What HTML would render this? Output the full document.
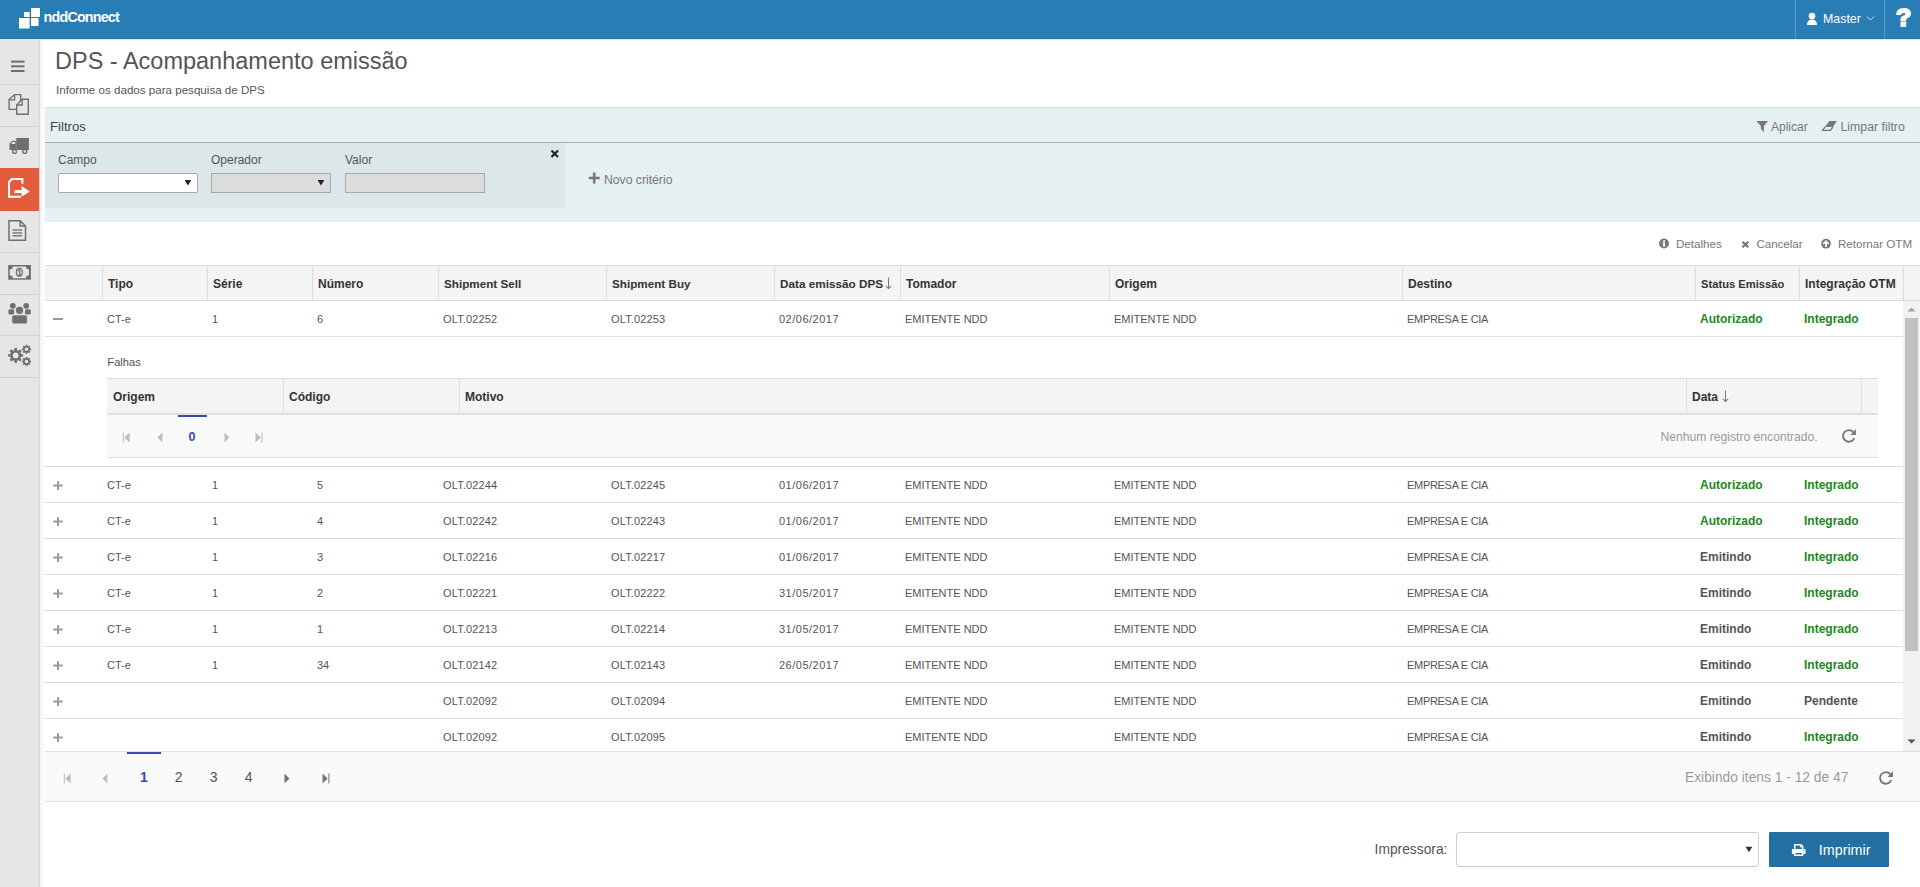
<!DOCTYPE html>
<html><head><meta charset="utf-8"><style>
html,body{margin:0;padding:0;}
body{width:1920px;height:887px;overflow:hidden;position:relative;background:#fff;font-family:"Liberation Sans", sans-serif;}
.t{position:absolute;white-space:nowrap;}
</style></head><body>
<div style="position:absolute;left:0px;top:0px;width:1920px;height:39px;background:#297db5"></div><div style="position:absolute;left:0px;top:38px;width:1920px;height:1px;background:#1e74b0"></div><svg style="position:absolute;left:0px;top:0px" width="44" height="39" viewBox="0 0 44 39"><rect x="24" y="12" width="5.6" height="5" fill="#fff"/><rect x="31" y="8" width="9" height="9" fill="#fff"/><rect x="19" y="18" width="10.6" height="10.5" fill="#fff"/><rect x="31" y="18" width="7.5" height="8" fill="#fff"/></svg><div class="t" style="left:43.6px;top:10.01px;font-size:14.3px;line-height:14.3px;color:#fff;font-weight:bold;letter-spacing:-0.8px">nddConnect</div><div style="position:absolute;left:1795px;top:0px;width:1px;height:39px;background:#5a9bc8"></div><div style="position:absolute;left:1884px;top:0px;width:1px;height:39px;background:#5a9bc8"></div><svg style="position:absolute;left:1806px;top:12px" width="12" height="14" viewBox="0 0 12 14"><circle cx="6" cy="4" r="3.3" fill="#fff"/><path d="M1 13 Q1 7.5 6 7.5 Q11 7.5 11 13 Z" fill="#fff"/></svg><div class="t" style="left:1823px;top:12.99px;font-size:12.4px;line-height:12.4px;color:#fff;font-weight:normal;">Master</div><svg style="position:absolute;left:1866px;top:15px" width="9" height="7" viewBox="0 0 9 7"><path d="M1 1.5 L4.5 5 L8 1.5" stroke="#cfe2f0" stroke-width="1" fill="none"/></svg><svg style="position:absolute;left:1894px;top:6px" width="20" height="23" viewBox="0 0 20 23"><path d="M2 8.9 Q2.5 1.9 9.6 1.9 Q17.1 1.9 17.1 7.6 Q17.1 10.8 13.6 12.3 Q12.2 12.9 12.2 14 V15 H6.5 V13.2 Q6.5 10.6 9.6 9.6 Q11.4 9 11.4 7.9 Q11.4 6.9 9.5 6.9 Q7.4 6.9 6.8 8.9 Z" fill="#fff"/><rect x="6.5" y="15.5" width="5.7" height="5.5" fill="#fff"/></svg><div style="position:absolute;left:0px;top:39px;width:39px;height:848px;background:#e6e6e6"></div><div style="position:absolute;left:39px;top:39px;width:1px;height:848px;background:#d6d6d6"></div><div style="position:absolute;left:40px;top:39px;width:6px;height:848px;background:linear-gradient(to right,rgba(0,0,0,0.045),rgba(0,0,0,0.015) 50%,rgba(0,0,0,0))"></div><div style="position:absolute;left:0px;top:39px;width:1920px;height:1px;background:#ebe8e5"></div><div style="position:absolute;left:0px;top:84px;width:39px;height:1px;background:#d3d3d3"></div><div style="position:absolute;left:0px;top:126px;width:39px;height:1px;background:#d3d3d3"></div><div style="position:absolute;left:0px;top:252px;width:39px;height:1px;background:#d3d3d3"></div><div style="position:absolute;left:0px;top:294px;width:39px;height:1px;background:#d3d3d3"></div><div style="position:absolute;left:0px;top:335px;width:39px;height:1px;background:#d3d3d3"></div><div style="position:absolute;left:0px;top:377px;width:39px;height:1px;background:#d3d3d3"></div><div style="position:absolute;left:0px;top:168px;width:39px;height:43px;background:#e35c3b"></div><svg style="position:absolute;left:11px;top:60px" width="14" height="13" viewBox="0 0 14 13"><rect x="0" y="0.6" width="13.5" height="2" fill="#6f6f6f"/><rect x="0" y="5.3" width="13.5" height="2" fill="#6f6f6f"/><rect x="0" y="10" width="13.5" height="2" fill="#6f6f6f"/></svg><svg style="position:absolute;left:7px;top:92px" width="24" height="24" viewBox="0 0 24 24"><path d="M2.1 7.6 L7.6 2.6 H13.7 V17.4 H2.1 Z" stroke="#6f6f6f" stroke-width="1.4" fill="none"/><path d="M7.6 2.6 V7.8 H2.1" stroke="#6f6f6f" stroke-width="1.3" fill="none"/><path d="M9.7 12.9 L15.2 7.3 H21.3 V22.2 H9.7 Z" fill="#e6e6e6" stroke="#6f6f6f" stroke-width="1.4"/><path d="M15.2 7.3 V13 H9.7" stroke="#6f6f6f" stroke-width="1.3" fill="none"/></svg><svg style="position:absolute;left:8px;top:136px" width="23" height="19" viewBox="0 0 23 19"><rect x="8.3" y="2" width="12.6" height="12" fill="#6f6f6f"/><path d="M1.5 14 V7.5 L4.5 4.8 H8.5 V14 Z" fill="#6f6f6f"/><path d="M2.8 8 L4.9 6.1 H7.3 V8 Z" fill="#e6e6e6"/><circle cx="6.5" cy="15.5" r="2.6" fill="#6f6f6f"/><circle cx="6.5" cy="15.5" r="1.2" fill="#e6e6e6"/><circle cx="16.8" cy="15.5" r="2.6" fill="#6f6f6f"/><circle cx="16.8" cy="15.5" r="1.2" fill="#e6e6e6"/></svg><svg style="position:absolute;left:7px;top:176px" width="24" height="24" viewBox="0 0 24 24"><path d="M15.35 7.7 V3.1 H5 L2.05 6 V20.85 H14" stroke="#fff" stroke-width="2" fill="none"/><rect x="7.5" y="14.1" width="7.3" height="3" fill="#fff"/><path d="M14.6 10 L22.75 15.5 L14.6 20.8 Z" fill="#fff"/></svg><svg style="position:absolute;left:7px;top:218px" width="22" height="25" viewBox="0 0 22 25"><path d="M2 2.8 H13.2 L18.5 8 V22.3 H2 Z" stroke="#6f6f6f" stroke-width="1.5" fill="none"/><path d="M13.2 2.8 V8 H18.5" stroke="#6f6f6f" stroke-width="1.5" fill="none"/><rect x="5.5" y="11.4" width="9.8" height="1.3" fill="#6f6f6f"/><rect x="5.5" y="14.3" width="9.8" height="1.3" fill="#6f6f6f"/><rect x="5.5" y="17.1" width="9.8" height="1.3" fill="#6f6f6f"/></svg><svg style="position:absolute;left:7px;top:263px" width="25" height="19" viewBox="0 0 25 19"><rect x="1.2" y="2" width="22.7" height="14.7" fill="#6f6f6f"/><path d="M5.75 3.6 H19 A3 3 0 0 0 22 6.6 V12.3 A3 3 0 0 0 19 15.3 H5.75 A3 3 0 0 0 2.75 12.3 V6.6 A3 3 0 0 0 5.75 3.6 Z" fill="#e6e6e6"/><ellipse cx="12.35" cy="9.3" rx="2.95" ry="3.9" fill="none" stroke="#6f6f6f" stroke-width="1.3"/><rect x="12" y="6.4" width="1.35" height="6" fill="#6f6f6f"/><rect x="10.8" y="11.7" width="3.5" height="1.2" fill="#6f6f6f"/><path d="M12.3 6.6 L10.7 8.2" stroke="#6f6f6f" stroke-width="1.2"/></svg><svg style="position:absolute;left:7px;top:302px" width="25" height="24" viewBox="0 0 25 24"><circle cx="5.86" cy="3.8" r="2.9" fill="#6f6f6f"/><circle cx="19.2" cy="3.8" r="2.9" fill="#6f6f6f"/><rect x="1.4" y="7.2" width="5.8" height="5.4" rx="1.6" fill="#6f6f6f"/><rect x="18" y="7.2" width="5.8" height="5.4" rx="1.6" fill="#6f6f6f"/><circle cx="12.56" cy="8.35" r="4.06" fill="#6f6f6f" stroke="#e6e6e6" stroke-width="1"/><rect x="4.8" y="12.9" width="15.5" height="9" rx="2" fill="#6f6f6f" stroke="#e6e6e6" stroke-width="0.8"/></svg><svg style="position:absolute;left:7px;top:342px" width="26" height="26" viewBox="0 0 26 26"><circle cx="8.67" cy="13.4" r="5.5" fill="#6f6f6f"/><rect x="7.32" y="6.05" width="2.7" height="7.35" fill="#6f6f6f" transform="rotate(0 8.67 13.4)"/><rect x="7.32" y="6.05" width="2.7" height="7.35" fill="#6f6f6f" transform="rotate(45 8.67 13.4)"/><rect x="7.32" y="6.05" width="2.7" height="7.35" fill="#6f6f6f" transform="rotate(90 8.67 13.4)"/><rect x="7.32" y="6.05" width="2.7" height="7.35" fill="#6f6f6f" transform="rotate(135 8.67 13.4)"/><rect x="7.32" y="6.05" width="2.7" height="7.35" fill="#6f6f6f" transform="rotate(180 8.67 13.4)"/><rect x="7.32" y="6.05" width="2.7" height="7.35" fill="#6f6f6f" transform="rotate(225 8.67 13.4)"/><rect x="7.32" y="6.05" width="2.7" height="7.35" fill="#6f6f6f" transform="rotate(270 8.67 13.4)"/><rect x="7.32" y="6.05" width="2.7" height="7.35" fill="#6f6f6f" transform="rotate(315 8.67 13.4)"/><circle cx="8.67" cy="13.4" r="2.85" fill="#e6e6e6"/><circle cx="19.5" cy="7.3" r="3.4" fill="#6f6f6f"/><rect x="18.65" y="2.70" width="1.7" height="4.60" fill="#6f6f6f" transform="rotate(0 19.5 7.3)"/><rect x="18.65" y="2.70" width="1.7" height="4.60" fill="#6f6f6f" transform="rotate(45 19.5 7.3)"/><rect x="18.65" y="2.70" width="1.7" height="4.60" fill="#6f6f6f" transform="rotate(90 19.5 7.3)"/><rect x="18.65" y="2.70" width="1.7" height="4.60" fill="#6f6f6f" transform="rotate(135 19.5 7.3)"/><rect x="18.65" y="2.70" width="1.7" height="4.60" fill="#6f6f6f" transform="rotate(180 19.5 7.3)"/><rect x="18.65" y="2.70" width="1.7" height="4.60" fill="#6f6f6f" transform="rotate(225 19.5 7.3)"/><rect x="18.65" y="2.70" width="1.7" height="4.60" fill="#6f6f6f" transform="rotate(270 19.5 7.3)"/><rect x="18.65" y="2.70" width="1.7" height="4.60" fill="#6f6f6f" transform="rotate(315 19.5 7.3)"/><circle cx="19.5" cy="7.3" r="1.75" fill="#e6e6e6"/><circle cx="19.5" cy="19.5" r="3.4" fill="#6f6f6f"/><rect x="18.65" y="14.90" width="1.7" height="4.60" fill="#6f6f6f" transform="rotate(0 19.5 19.5)"/><rect x="18.65" y="14.90" width="1.7" height="4.60" fill="#6f6f6f" transform="rotate(45 19.5 19.5)"/><rect x="18.65" y="14.90" width="1.7" height="4.60" fill="#6f6f6f" transform="rotate(90 19.5 19.5)"/><rect x="18.65" y="14.90" width="1.7" height="4.60" fill="#6f6f6f" transform="rotate(135 19.5 19.5)"/><rect x="18.65" y="14.90" width="1.7" height="4.60" fill="#6f6f6f" transform="rotate(180 19.5 19.5)"/><rect x="18.65" y="14.90" width="1.7" height="4.60" fill="#6f6f6f" transform="rotate(225 19.5 19.5)"/><rect x="18.65" y="14.90" width="1.7" height="4.60" fill="#6f6f6f" transform="rotate(270 19.5 19.5)"/><rect x="18.65" y="14.90" width="1.7" height="4.60" fill="#6f6f6f" transform="rotate(315 19.5 19.5)"/><circle cx="19.5" cy="19.5" r="1.75" fill="#e6e6e6"/></svg><div class="t" style="left:55px;top:49.99px;font-size:23.5px;line-height:23.5px;color:#555;font-weight:normal;">DPS - Acompanhamento emissão</div><div class="t" style="left:56px;top:83.99px;font-size:11.6px;line-height:11.6px;color:#555;font-weight:normal;">Informe os dados para pesquisa de DPS</div><div style="position:absolute;left:45px;top:107px;width:1875px;height:1px;background:#d9dfe1"></div><div style="position:absolute;left:45px;top:108px;width:1875px;height:34px;background:#e5f0f2"></div><div style="position:absolute;left:45px;top:142px;width:1875px;height:1px;background:#a8b2b5"></div><div style="position:absolute;left:45px;top:143px;width:1875px;height:79px;background:#e5f0f2"></div><div style="position:absolute;left:45px;top:143px;width:520px;height:65px;background:#dce7e9"></div><div class="t" style="left:50px;top:119.99px;font-size:13.2px;line-height:13.2px;color:#444;font-weight:normal;">Filtros</div><svg style="position:absolute;left:1756px;top:120px" width="13" height="13" viewBox="0 0 13 13"><path d="M0.4 1 H12 L7.9 5.9 V11.9 L4.9 9 V5.9 Z" fill="#777"/></svg><div class="t" style="left:1771px;top:121.01px;font-size:12px;line-height:12px;color:#777;font-weight:normal;">Aplicar</div><svg style="position:absolute;left:1821px;top:120px" width="17" height="13" viewBox="0 0 17 13"><path d="M8.2 1 H16 L11.9 7 H4 Z" fill="#777"/><path d="M4 7 L1.5 10.4 H9.4 L11.9 7" fill="none" stroke="#777" stroke-width="1.3" stroke-linejoin="miter"/></svg><div class="t" style="left:1840.5px;top:121.00px;font-size:12.3px;line-height:12.3px;color:#777;font-weight:normal;">Limpar filtro</div><div class="t" style="left:58px;top:154.00px;font-size:12px;line-height:12px;color:#555;font-weight:normal;">Campo</div><div class="t" style="left:211px;top:154.00px;font-size:12px;line-height:12px;color:#555;font-weight:normal;">Operador</div><div class="t" style="left:345px;top:154.00px;font-size:12px;line-height:12px;color:#555;font-weight:normal;">Valor</div><div style="position:absolute;left:58px;top:173px;width:140px;height:20px;background:#fff;border:1px solid #a9a9a9;box-sizing:border-box;border-radius:2px"></div><div style="position:absolute;left:211px;top:173px;width:120px;height:20px;background:#dcdcdc;border:1px solid #a9a9a9;box-sizing:border-box"></div><div style="position:absolute;left:345px;top:173px;width:140px;height:20px;background:#dcdcdc;border:1px solid #a9a9a9;box-sizing:border-box"></div><svg style="position:absolute;left:183px;top:178px" width="10" height="9" viewBox="0 0 10 9"><path d="M2 2 H7.9 V2.8 L4.95 7.4 L2 2.8 Z" fill="#222"/></svg><svg style="position:absolute;left:316px;top:178px" width="10" height="9" viewBox="0 0 10 9"><path d="M2 2 H7.9 V2.8 L4.95 7.4 L2 2.8 Z" fill="#222"/></svg><svg style="position:absolute;left:549px;top:148px" width="12" height="12" viewBox="0 0 12 12"><path d="M2.5 2.5 L9 9 M9 2.5 L2.5 9" stroke="#222" stroke-width="2.2"/></svg><svg style="position:absolute;left:587px;top:171px" width="14" height="14" viewBox="0 0 14 14"><path d="M7.2 1.5 V12.5 M1.7 7 H12.7" stroke="#777" stroke-width="2.6"/></svg><div class="t" style="left:604px;top:174.01px;font-size:12.2px;line-height:12.2px;color:#777;font-weight:normal;">Novo critério</div><svg style="position:absolute;left:1658px;top:237px" width="12" height="13" viewBox="0 0 12 13"><circle cx="6" cy="6.5" r="4.95" fill="#777"/><circle cx="6.1" cy="4.1" r="1.05" fill="#fff"/><path d="M4.3 5.6 H7 V8.9 H7.6 V9.6 H4.5 V8.9 H5.1 V6.3 H4.3 Z" fill="#fff"/></svg><div class="t" style="left:1676px;top:237.99px;font-size:11.6px;line-height:11.6px;color:#777;font-weight:normal;">Detalhes</div><svg style="position:absolute;left:1740px;top:239px" width="11" height="10" viewBox="0 0 11 10"><path d="M2.5 2.8 L8.3 8.2 M8.3 2.8 L2.5 8.2" stroke="#777" stroke-width="2.2"/></svg><div class="t" style="left:1756.5px;top:239.00px;font-size:11.5px;line-height:11.5px;color:#777;font-weight:normal;">Cancelar</div><svg style="position:absolute;left:1820px;top:237px" width="12" height="13" viewBox="0 0 12 13"><circle cx="6" cy="6.7" r="4.85" fill="#777"/><path d="M6 3 L9.4 6.6 L8.4 7.6 L6.95 6.2 V9.9 H5.05 V6.2 L3.6 7.6 L2.6 6.6 Z" fill="#fff"/></svg><div class="t" style="left:1838px;top:237.99px;font-size:11.6px;line-height:11.6px;color:#777;font-weight:normal;">Retornar OTM</div><div style="position:absolute;left:45px;top:265px;width:1875px;height:1px;background:#dddddd"></div><div style="position:absolute;left:45px;top:266px;width:1875px;height:34px;background:#f4f4f4"></div><div style="position:absolute;left:45px;top:300px;width:1875px;height:1px;background:#dddddd"></div><div style="position:absolute;left:102px;top:266px;width:1px;height:34px;background:#dddddd"></div><div style="position:absolute;left:207px;top:266px;width:1px;height:34px;background:#dddddd"></div><div style="position:absolute;left:312px;top:266px;width:1px;height:34px;background:#dddddd"></div><div style="position:absolute;left:438px;top:266px;width:1px;height:34px;background:#dddddd"></div><div style="position:absolute;left:606px;top:266px;width:1px;height:34px;background:#dddddd"></div><div style="position:absolute;left:774px;top:266px;width:1px;height:34px;background:#dddddd"></div><div style="position:absolute;left:900px;top:266px;width:1px;height:34px;background:#dddddd"></div><div style="position:absolute;left:1109px;top:266px;width:1px;height:34px;background:#dddddd"></div><div style="position:absolute;left:1402px;top:266px;width:1px;height:34px;background:#dddddd"></div><div style="position:absolute;left:1695px;top:266px;width:1px;height:34px;background:#dddddd"></div><div style="position:absolute;left:1799px;top:266px;width:1px;height:34px;background:#dddddd"></div><div style="position:absolute;left:1903px;top:266px;width:1px;height:34px;background:#dddddd"></div><div class="t" style="left:108px;top:278.00px;font-size:12px;line-height:12px;color:#333;font-weight:bold;">Tipo</div><div class="t" style="left:213px;top:278.00px;font-size:12px;line-height:12px;color:#333;font-weight:bold;">Série</div><div class="t" style="left:318px;top:278.00px;font-size:12px;line-height:12px;color:#333;font-weight:bold;">Número</div><div class="t" style="left:444px;top:278.01px;font-size:11.7px;line-height:11.7px;color:#333;font-weight:bold;">Shipment Sell</div><div class="t" style="left:612px;top:278.01px;font-size:11.7px;line-height:11.7px;color:#333;font-weight:bold;">Shipment Buy</div><div class="t" style="left:780px;top:277.99px;font-size:11.75px;line-height:11.75px;color:#333;font-weight:bold;">Data emissão DPS</div><div class="t" style="left:906px;top:278.00px;font-size:12px;line-height:12px;color:#333;font-weight:bold;">Tomador</div><div class="t" style="left:1115px;top:278.00px;font-size:12px;line-height:12px;color:#333;font-weight:bold;">Origem</div><div class="t" style="left:1408px;top:278.00px;font-size:12px;line-height:12px;color:#333;font-weight:bold;">Destino</div><div class="t" style="left:1701px;top:279.01px;font-size:11.2px;line-height:11.2px;color:#333;font-weight:bold;">Status Emissão</div><div class="t" style="left:1805px;top:278.00px;font-size:12px;line-height:12px;color:#333;font-weight:bold;">Integração OTM</div><svg style="position:absolute;left:885px;top:277px" width="7" height="13" viewBox="0 0 7 13"><path d="M3.5 0.5 V11.5 M0.8 8.8 L3.5 11.6 L6.2 8.8" stroke="#777" stroke-width="1.05" fill="none"/></svg><div style="position:absolute;left:0;top:0;width:1920px;height:751px;overflow:hidden"><div style="position:absolute;left:53px;top:318px;width:10px;height:2px;background:#999"></div><div class="t" style="left:107px;top:314.00px;font-size:11px;line-height:11px;color:#555;font-weight:normal;">CT-e</div><div class="t" style="left:212px;top:314.00px;font-size:11px;line-height:11px;color:#555;font-weight:normal;">1</div><div class="t" style="left:317px;top:314.00px;font-size:11px;line-height:11px;color:#555;font-weight:normal;">6</div><div class="t" style="left:443px;top:314.00px;font-size:11px;line-height:11px;color:#555;font-weight:normal;letter-spacing:0.15px">OLT.02252</div><div class="t" style="left:611px;top:314.00px;font-size:11px;line-height:11px;color:#555;font-weight:normal;letter-spacing:0.15px">OLT.02253</div><div class="t" style="left:779px;top:314.00px;font-size:11px;line-height:11px;color:#555;font-weight:normal;letter-spacing:0.5px">02/06/2017</div><div class="t" style="left:905px;top:314.00px;font-size:11px;line-height:11px;color:#555;font-weight:normal;">EMITENTE NDD</div><div class="t" style="left:1114px;top:314.00px;font-size:11px;line-height:11px;color:#555;font-weight:normal;">EMITENTE NDD</div><div class="t" style="left:1407px;top:314.00px;font-size:11px;line-height:11px;color:#555;font-weight:normal;letter-spacing:-0.3px">EMPRESA E CIA</div><div class="t" style="left:1700px;top:313.00px;font-size:12px;line-height:12px;color:#198a19;font-weight:bold;">Autorizado</div><div class="t" style="left:1804px;top:313.00px;font-size:12px;line-height:12px;color:#198a19;font-weight:bold;">Integrado</div><div style="position:absolute;left:45px;top:336px;width:1858px;height:1px;background:#dddddd"></div><svg style="position:absolute;left:53px;top:481px" width="10" height="10" viewBox="0 0 10 10"><path d="M5 0.2 V9 M0.3 4.6 H9.7" stroke="#9a9a9a" stroke-width="2"/></svg><div class="t" style="left:107px;top:480.00px;font-size:11px;line-height:11px;color:#555;font-weight:normal;">CT-e</div><div class="t" style="left:212px;top:480.00px;font-size:11px;line-height:11px;color:#555;font-weight:normal;">1</div><div class="t" style="left:317px;top:480.00px;font-size:11px;line-height:11px;color:#555;font-weight:normal;">5</div><div class="t" style="left:443px;top:480.00px;font-size:11px;line-height:11px;color:#555;font-weight:normal;letter-spacing:0.15px">OLT.02244</div><div class="t" style="left:611px;top:480.00px;font-size:11px;line-height:11px;color:#555;font-weight:normal;letter-spacing:0.15px">OLT.02245</div><div class="t" style="left:779px;top:480.00px;font-size:11px;line-height:11px;color:#555;font-weight:normal;letter-spacing:0.5px">01/06/2017</div><div class="t" style="left:905px;top:480.00px;font-size:11px;line-height:11px;color:#555;font-weight:normal;">EMITENTE NDD</div><div class="t" style="left:1114px;top:480.00px;font-size:11px;line-height:11px;color:#555;font-weight:normal;">EMITENTE NDD</div><div class="t" style="left:1407px;top:480.00px;font-size:11px;line-height:11px;color:#555;font-weight:normal;letter-spacing:-0.3px">EMPRESA E CIA</div><div class="t" style="left:1700px;top:479.00px;font-size:12px;line-height:12px;color:#198a19;font-weight:bold;">Autorizado</div><div class="t" style="left:1804px;top:479.00px;font-size:12px;line-height:12px;color:#198a19;font-weight:bold;">Integrado</div><div style="position:absolute;left:45px;top:502px;width:1858px;height:1px;background:#dddddd"></div><svg style="position:absolute;left:53px;top:517px" width="10" height="10" viewBox="0 0 10 10"><path d="M5 0.2 V9 M0.3 4.6 H9.7" stroke="#9a9a9a" stroke-width="2"/></svg><div class="t" style="left:107px;top:516.00px;font-size:11px;line-height:11px;color:#555;font-weight:normal;">CT-e</div><div class="t" style="left:212px;top:516.00px;font-size:11px;line-height:11px;color:#555;font-weight:normal;">1</div><div class="t" style="left:317px;top:516.00px;font-size:11px;line-height:11px;color:#555;font-weight:normal;">4</div><div class="t" style="left:443px;top:516.00px;font-size:11px;line-height:11px;color:#555;font-weight:normal;letter-spacing:0.15px">OLT.02242</div><div class="t" style="left:611px;top:516.00px;font-size:11px;line-height:11px;color:#555;font-weight:normal;letter-spacing:0.15px">OLT.02243</div><div class="t" style="left:779px;top:516.00px;font-size:11px;line-height:11px;color:#555;font-weight:normal;letter-spacing:0.5px">01/06/2017</div><div class="t" style="left:905px;top:516.00px;font-size:11px;line-height:11px;color:#555;font-weight:normal;">EMITENTE NDD</div><div class="t" style="left:1114px;top:516.00px;font-size:11px;line-height:11px;color:#555;font-weight:normal;">EMITENTE NDD</div><div class="t" style="left:1407px;top:516.00px;font-size:11px;line-height:11px;color:#555;font-weight:normal;letter-spacing:-0.3px">EMPRESA E CIA</div><div class="t" style="left:1700px;top:515.00px;font-size:12px;line-height:12px;color:#198a19;font-weight:bold;">Autorizado</div><div class="t" style="left:1804px;top:515.00px;font-size:12px;line-height:12px;color:#198a19;font-weight:bold;">Integrado</div><div style="position:absolute;left:45px;top:538px;width:1858px;height:1px;background:#dddddd"></div><svg style="position:absolute;left:53px;top:553px" width="10" height="10" viewBox="0 0 10 10"><path d="M5 0.2 V9 M0.3 4.6 H9.7" stroke="#9a9a9a" stroke-width="2"/></svg><div class="t" style="left:107px;top:552.00px;font-size:11px;line-height:11px;color:#555;font-weight:normal;">CT-e</div><div class="t" style="left:212px;top:552.00px;font-size:11px;line-height:11px;color:#555;font-weight:normal;">1</div><div class="t" style="left:317px;top:552.00px;font-size:11px;line-height:11px;color:#555;font-weight:normal;">3</div><div class="t" style="left:443px;top:552.00px;font-size:11px;line-height:11px;color:#555;font-weight:normal;letter-spacing:0.15px">OLT.02216</div><div class="t" style="left:611px;top:552.00px;font-size:11px;line-height:11px;color:#555;font-weight:normal;letter-spacing:0.15px">OLT.02217</div><div class="t" style="left:779px;top:552.00px;font-size:11px;line-height:11px;color:#555;font-weight:normal;letter-spacing:0.5px">01/06/2017</div><div class="t" style="left:905px;top:552.00px;font-size:11px;line-height:11px;color:#555;font-weight:normal;">EMITENTE NDD</div><div class="t" style="left:1114px;top:552.00px;font-size:11px;line-height:11px;color:#555;font-weight:normal;">EMITENTE NDD</div><div class="t" style="left:1407px;top:552.00px;font-size:11px;line-height:11px;color:#555;font-weight:normal;letter-spacing:-0.3px">EMPRESA E CIA</div><div class="t" style="left:1700px;top:551.00px;font-size:12px;line-height:12px;color:#555;font-weight:bold;">Emitindo</div><div class="t" style="left:1804px;top:551.00px;font-size:12px;line-height:12px;color:#198a19;font-weight:bold;">Integrado</div><div style="position:absolute;left:45px;top:574px;width:1858px;height:1px;background:#dddddd"></div><svg style="position:absolute;left:53px;top:589px" width="10" height="10" viewBox="0 0 10 10"><path d="M5 0.2 V9 M0.3 4.6 H9.7" stroke="#9a9a9a" stroke-width="2"/></svg><div class="t" style="left:107px;top:588.00px;font-size:11px;line-height:11px;color:#555;font-weight:normal;">CT-e</div><div class="t" style="left:212px;top:588.00px;font-size:11px;line-height:11px;color:#555;font-weight:normal;">1</div><div class="t" style="left:317px;top:588.00px;font-size:11px;line-height:11px;color:#555;font-weight:normal;">2</div><div class="t" style="left:443px;top:588.00px;font-size:11px;line-height:11px;color:#555;font-weight:normal;letter-spacing:0.15px">OLT.02221</div><div class="t" style="left:611px;top:588.00px;font-size:11px;line-height:11px;color:#555;font-weight:normal;letter-spacing:0.15px">OLT.02222</div><div class="t" style="left:779px;top:588.00px;font-size:11px;line-height:11px;color:#555;font-weight:normal;letter-spacing:0.5px">31/05/2017</div><div class="t" style="left:905px;top:588.00px;font-size:11px;line-height:11px;color:#555;font-weight:normal;">EMITENTE NDD</div><div class="t" style="left:1114px;top:588.00px;font-size:11px;line-height:11px;color:#555;font-weight:normal;">EMITENTE NDD</div><div class="t" style="left:1407px;top:588.00px;font-size:11px;line-height:11px;color:#555;font-weight:normal;letter-spacing:-0.3px">EMPRESA E CIA</div><div class="t" style="left:1700px;top:587.00px;font-size:12px;line-height:12px;color:#555;font-weight:bold;">Emitindo</div><div class="t" style="left:1804px;top:587.00px;font-size:12px;line-height:12px;color:#198a19;font-weight:bold;">Integrado</div><div style="position:absolute;left:45px;top:610px;width:1858px;height:1px;background:#dddddd"></div><svg style="position:absolute;left:53px;top:625px" width="10" height="10" viewBox="0 0 10 10"><path d="M5 0.2 V9 M0.3 4.6 H9.7" stroke="#9a9a9a" stroke-width="2"/></svg><div class="t" style="left:107px;top:624.00px;font-size:11px;line-height:11px;color:#555;font-weight:normal;">CT-e</div><div class="t" style="left:212px;top:624.00px;font-size:11px;line-height:11px;color:#555;font-weight:normal;">1</div><div class="t" style="left:317px;top:624.00px;font-size:11px;line-height:11px;color:#555;font-weight:normal;">1</div><div class="t" style="left:443px;top:624.00px;font-size:11px;line-height:11px;color:#555;font-weight:normal;letter-spacing:0.15px">OLT.02213</div><div class="t" style="left:611px;top:624.00px;font-size:11px;line-height:11px;color:#555;font-weight:normal;letter-spacing:0.15px">OLT.02214</div><div class="t" style="left:779px;top:624.00px;font-size:11px;line-height:11px;color:#555;font-weight:normal;letter-spacing:0.5px">31/05/2017</div><div class="t" style="left:905px;top:624.00px;font-size:11px;line-height:11px;color:#555;font-weight:normal;">EMITENTE NDD</div><div class="t" style="left:1114px;top:624.00px;font-size:11px;line-height:11px;color:#555;font-weight:normal;">EMITENTE NDD</div><div class="t" style="left:1407px;top:624.00px;font-size:11px;line-height:11px;color:#555;font-weight:normal;letter-spacing:-0.3px">EMPRESA E CIA</div><div class="t" style="left:1700px;top:623.00px;font-size:12px;line-height:12px;color:#555;font-weight:bold;">Emitindo</div><div class="t" style="left:1804px;top:623.00px;font-size:12px;line-height:12px;color:#198a19;font-weight:bold;">Integrado</div><div style="position:absolute;left:45px;top:646px;width:1858px;height:1px;background:#dddddd"></div><svg style="position:absolute;left:53px;top:661px" width="10" height="10" viewBox="0 0 10 10"><path d="M5 0.2 V9 M0.3 4.6 H9.7" stroke="#9a9a9a" stroke-width="2"/></svg><div class="t" style="left:107px;top:660.00px;font-size:11px;line-height:11px;color:#555;font-weight:normal;">CT-e</div><div class="t" style="left:212px;top:660.00px;font-size:11px;line-height:11px;color:#555;font-weight:normal;">1</div><div class="t" style="left:317px;top:660.00px;font-size:11px;line-height:11px;color:#555;font-weight:normal;">34</div><div class="t" style="left:443px;top:660.00px;font-size:11px;line-height:11px;color:#555;font-weight:normal;letter-spacing:0.15px">OLT.02142</div><div class="t" style="left:611px;top:660.00px;font-size:11px;line-height:11px;color:#555;font-weight:normal;letter-spacing:0.15px">OLT.02143</div><div class="t" style="left:779px;top:660.00px;font-size:11px;line-height:11px;color:#555;font-weight:normal;letter-spacing:0.5px">26/05/2017</div><div class="t" style="left:905px;top:660.00px;font-size:11px;line-height:11px;color:#555;font-weight:normal;">EMITENTE NDD</div><div class="t" style="left:1114px;top:660.00px;font-size:11px;line-height:11px;color:#555;font-weight:normal;">EMITENTE NDD</div><div class="t" style="left:1407px;top:660.00px;font-size:11px;line-height:11px;color:#555;font-weight:normal;letter-spacing:-0.3px">EMPRESA E CIA</div><div class="t" style="left:1700px;top:659.00px;font-size:12px;line-height:12px;color:#555;font-weight:bold;">Emitindo</div><div class="t" style="left:1804px;top:659.00px;font-size:12px;line-height:12px;color:#198a19;font-weight:bold;">Integrado</div><div style="position:absolute;left:45px;top:682px;width:1858px;height:1px;background:#dddddd"></div><svg style="position:absolute;left:53px;top:697px" width="10" height="10" viewBox="0 0 10 10"><path d="M5 0.2 V9 M0.3 4.6 H9.7" stroke="#9a9a9a" stroke-width="2"/></svg><div class="t" style="left:443px;top:696.00px;font-size:11px;line-height:11px;color:#555;font-weight:normal;letter-spacing:0.15px">OLT.02092</div><div class="t" style="left:611px;top:696.00px;font-size:11px;line-height:11px;color:#555;font-weight:normal;letter-spacing:0.15px">OLT.02094</div><div class="t" style="left:905px;top:696.00px;font-size:11px;line-height:11px;color:#555;font-weight:normal;">EMITENTE NDD</div><div class="t" style="left:1114px;top:696.00px;font-size:11px;line-height:11px;color:#555;font-weight:normal;">EMITENTE NDD</div><div class="t" style="left:1407px;top:696.00px;font-size:11px;line-height:11px;color:#555;font-weight:normal;letter-spacing:-0.3px">EMPRESA E CIA</div><div class="t" style="left:1700px;top:695.00px;font-size:12px;line-height:12px;color:#555;font-weight:bold;">Emitindo</div><div class="t" style="left:1804px;top:695.00px;font-size:12px;line-height:12px;color:#555;font-weight:bold;">Pendente</div><div style="position:absolute;left:45px;top:718px;width:1858px;height:1px;background:#dddddd"></div><svg style="position:absolute;left:53px;top:733px" width="10" height="10" viewBox="0 0 10 10"><path d="M5 0.2 V9 M0.3 4.6 H9.7" stroke="#9a9a9a" stroke-width="2"/></svg><div class="t" style="left:443px;top:732.00px;font-size:11px;line-height:11px;color:#555;font-weight:normal;letter-spacing:0.15px">OLT.02092</div><div class="t" style="left:611px;top:732.00px;font-size:11px;line-height:11px;color:#555;font-weight:normal;letter-spacing:0.15px">OLT.02095</div><div class="t" style="left:905px;top:732.00px;font-size:11px;line-height:11px;color:#555;font-weight:normal;">EMITENTE NDD</div><div class="t" style="left:1114px;top:732.00px;font-size:11px;line-height:11px;color:#555;font-weight:normal;">EMITENTE NDD</div><div class="t" style="left:1407px;top:732.00px;font-size:11px;line-height:11px;color:#555;font-weight:normal;letter-spacing:-0.3px">EMPRESA E CIA</div><div class="t" style="left:1700px;top:731.00px;font-size:12px;line-height:12px;color:#555;font-weight:bold;">Emitindo</div><div class="t" style="left:1804px;top:731.00px;font-size:12px;line-height:12px;color:#198a19;font-weight:bold;">Integrado</div><div style="position:absolute;left:45px;top:754px;width:1858px;height:1px;background:#dddddd"></div></div><div style="position:absolute;left:45px;top:466px;width:1858px;height:1px;background:#dddddd"></div><div class="t" style="left:107.3px;top:357.01px;font-size:11.2px;line-height:11.2px;color:#555;font-weight:normal;">Falhas</div><div style="position:absolute;left:107px;top:378px;width:1771px;height:1px;background:#dddddd"></div><div style="position:absolute;left:107px;top:379px;width:1771px;height:34px;background:#f4f4f4"></div><div style="position:absolute;left:107px;top:413px;width:1771px;height:2px;background:#e0e0e0"></div><div style="position:absolute;left:107px;top:415px;width:1771px;height:42px;background:#f9f9f9"></div><div style="position:absolute;left:107px;top:457px;width:1771px;height:1px;background:#dddddd"></div><div style="position:absolute;left:283px;top:379px;width:1px;height:34px;background:#dddddd"></div><div style="position:absolute;left:459px;top:379px;width:1px;height:34px;background:#dddddd"></div><div style="position:absolute;left:1686px;top:379px;width:1px;height:34px;background:#dddddd"></div><div style="position:absolute;left:1861px;top:379px;width:1px;height:34px;background:#dddddd"></div><div class="t" style="left:113px;top:391.00px;font-size:12px;line-height:12px;color:#333;font-weight:bold;">Origem</div><div class="t" style="left:289px;top:391.00px;font-size:12px;line-height:12px;color:#333;font-weight:bold;">Código</div><div class="t" style="left:465px;top:391.00px;font-size:12px;line-height:12px;color:#333;font-weight:bold;">Motivo</div><div class="t" style="left:1692px;top:391.00px;font-size:12px;line-height:12px;color:#333;font-weight:bold;">Data</div><svg style="position:absolute;left:1722px;top:390px" width="7" height="13" viewBox="0 0 7 13"><path d="M3.5 0.5 V11.5 M0.8 8.8 L3.5 11.6 L6.2 8.8" stroke="#777" stroke-width="1.05" fill="none"/></svg><div style="position:absolute;left:178px;top:415px;width:29px;height:2px;background:#3a4ab0"></div><div class="t" style="left:188.5px;top:431.01px;font-size:12.5px;line-height:12.5px;color:#3a4ab0;font-weight:bold;">0</div><svg style="position:absolute;left:122px;top:431.5px" width="9" height="11" viewBox="0 0 9 11"><rect x="0.8" y="0.5" width="1.05" height="10" fill="#bdbdbd"/><path d="M7.6 0.6 V10.4 L2.4 5.5 Z" fill="#bdbdbd"/></svg><svg style="position:absolute;left:157px;top:431.5px" width="7" height="11" viewBox="0 0 7 11"><path d="M5.4 0.6 V10.4 L0.5 5.5 Z" fill="#bdbdbd"/></svg><svg style="position:absolute;left:224px;top:431.5px" width="7" height="11" viewBox="0 0 7 11"><path d="M0.5 0.6 V10.4 L5.4 5.5 Z" fill="#bdbdbd"/></svg><svg style="position:absolute;left:255px;top:431.5px" width="9" height="11" viewBox="0 0 9 11"><path d="M0.5 0.6 V10.4 L5.7 5.5 Z" fill="#bdbdbd"/><rect x="6.4" y="0.5" width="1.05" height="10" fill="#bdbdbd"/></svg><div class="t" style="left:1660.5px;top:431.00px;font-size:12.15px;line-height:12.15px;color:#9a9a9a;font-weight:normal;">Nenhum registro encontrado.</div><svg style="position:absolute;left:1841px;top:428px" width="16" height="16" viewBox="0 0 16 16"><path d="M13.26 9.98 A5.8 5.8 0 1 1 12.2 4.1" fill="none" stroke="#777" stroke-width="1.9"/><path d="M14.95 0.9 V6.9 H9.4 Z" fill="#777"/></svg><div style="position:absolute;left:1903px;top:301px;width:17px;height:450px;background:#f1f1f1"></div><div style="position:absolute;left:1905px;top:318px;width:12.5px;height:333px;background:#c1c1c1"></div><svg style="position:absolute;left:1906px;top:306px" width="11" height="7" viewBox="0 0 11 7"><path d="M1.5 5.5 H9.5 L5.5 1.5 Z" fill="#a3a3a3"/></svg><svg style="position:absolute;left:1906px;top:738px" width="11" height="7" viewBox="0 0 11 7"><path d="M1.5 1.5 H9.5 L5.5 5.5 Z" fill="#505050"/></svg><div style="position:absolute;left:45px;top:751px;width:1875px;height:1px;background:#dddddd"></div><div style="position:absolute;left:45px;top:752px;width:1875px;height:49px;background:#fafafa"></div><div style="position:absolute;left:45px;top:801px;width:1875px;height:1px;background:#dddddd"></div><div style="position:absolute;left:127px;top:752px;width:34px;height:2px;background:#3a4ab0"></div><svg style="position:absolute;left:62.8px;top:772.5px" width="9" height="11" viewBox="0 0 9 11"><rect x="0.8" y="0.5" width="1.05" height="10" fill="#bdbdbd"/><path d="M7.6 0.6 V10.4 L2.4 5.5 Z" fill="#bdbdbd"/></svg><svg style="position:absolute;left:101.8px;top:772.5px" width="7" height="11" viewBox="0 0 7 11"><path d="M5.4 0.6 V10.4 L0.5 5.5 Z" fill="#bdbdbd"/></svg><svg style="position:absolute;left:284.3px;top:772.5px" width="7" height="11" viewBox="0 0 7 11"><path d="M0.5 0.6 V10.4 L5.4 5.5 Z" fill="#777"/></svg><svg style="position:absolute;left:322px;top:772.5px" width="9" height="11" viewBox="0 0 9 11"><path d="M0.5 0.6 V10.4 L5.7 5.5 Z" fill="#777"/><rect x="6.4" y="0.5" width="1.05" height="10" fill="#777"/></svg><div class="t" style="left:140px;top:770.01px;font-size:14px;line-height:14px;color:#3a4ab0;font-weight:bold;">1</div><div class="t" style="left:174.8px;top:770.01px;font-size:14px;line-height:14px;color:#555;font-weight:normal;">2</div><div class="t" style="left:209.8px;top:770.01px;font-size:14px;line-height:14px;color:#555;font-weight:normal;">3</div><div class="t" style="left:244.8px;top:770.01px;font-size:14px;line-height:14px;color:#555;font-weight:normal;">4</div><div class="t" style="left:1685px;top:771.01px;font-size:13.8px;line-height:13.8px;color:#9a9a9a;font-weight:normal;">Exibindo itens 1 - 12 de 47</div><svg style="position:absolute;left:1878px;top:769.5px" width="16" height="16" viewBox="0 0 16 16"><path d="M13.26 9.98 A5.8 5.8 0 1 1 12.2 4.1" fill="none" stroke="#777" stroke-width="1.9"/><path d="M14.95 0.9 V6.9 H9.4 Z" fill="#777"/></svg><div class="t" style="left:1374.6px;top:843.01px;font-size:13.8px;line-height:13.8px;color:#555;font-weight:normal;">Impressora:</div><div style="position:absolute;left:1456px;top:832px;width:303px;height:35px;background:#fff;border:1px solid #cccccc;box-sizing:border-box;border-radius:3px"></div><svg style="position:absolute;left:1744px;top:845px" width="10" height="9" viewBox="0 0 10 9"><path d="M2 1.8 H7.9 V2.6 L4.95 7.2 L2 2.6 Z" fill="#333"/></svg><div style="position:absolute;left:1769px;top:832px;width:120px;height:35px;background:#246fa2;border-radius:1px"></div><svg style="position:absolute;left:1790px;top:842px" width="17" height="16" viewBox="0 0 17 16"><path d="M4.75 7.3 V2.65 H10.9 L12.6 4.35 V7.3" fill="none" stroke="#fff" stroke-width="1.5"/><path d="M10.4 2.65 V4.9 H12.6" fill="none" stroke="#fff" stroke-width="1"/><path d="M2.5 6.9 H14.95 Q15.55 6.9 15.55 7.5 V11.9 H13.35 V10.9 H4 V11.9 H1.9 V7.5 Q1.9 6.9 2.5 6.9 Z" fill="#fff"/><circle cx="13.4" cy="8.4" r="0.5" fill="#246fa2"/><path d="M4.75 10.9 V13.15 H12.6 V10.9" fill="none" stroke="#fff" stroke-width="1.5"/></svg><div class="t" style="left:1818.8px;top:843.01px;font-size:14.3px;line-height:14.3px;color:#fff;font-weight:normal;">Imprimir</div>
</body></html>
